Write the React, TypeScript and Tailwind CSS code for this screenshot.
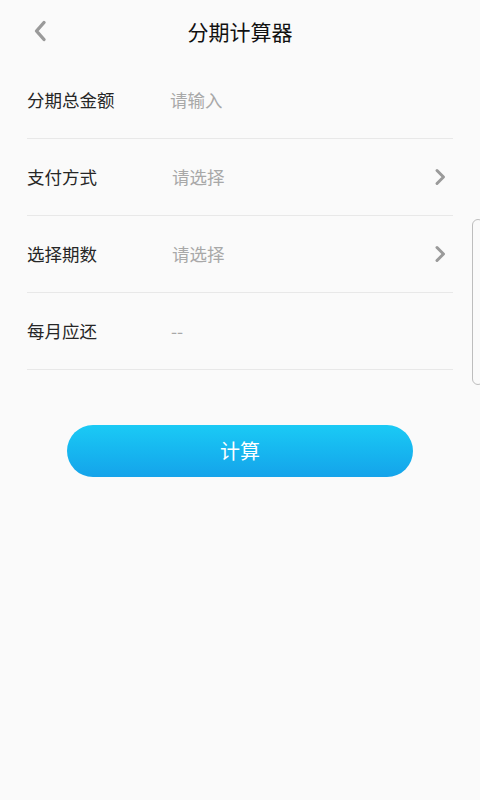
import React from "react";

const rows = [
  { label: "分期总金额", value: "请输入", arrow: false, pad: "pl-0" },
  { label: "支付方式", value: "请选择", arrow: true, pad: "pl-[2px]" },
  { label: "选择期数", value: "请选择", arrow: true, pad: "pl-[2px]" },
  { label: "每月应还", value: "--", arrow: false, pad: "pl-[1px]" },
];

function Chevron({ dir }: { dir: "left" | "right" }) {
  if (dir === "left") {
    return (
      <svg width="14" height="22" viewBox="0 0 14 22" fill="none">
        <path d="M11 2.5L3.5 11l7.5 8.5" stroke="#9a9a9a" strokeWidth="3.4" strokeLinecap="round" strokeLinejoin="round" />
      </svg>
    );
  }
  return (
    <svg width="12" height="18" viewBox="0 0 12 18" fill="none">
      <path d="M3 2.5L9.5 9 3 15.5" stroke="#9a9a9a" strokeWidth="3" strokeLinecap="round" strokeLinejoin="round" />
    </svg>
  );
}

export default function App() {
  return (
    <div
      className="relative w-[480px] h-[800px] bg-[#fafafa] overflow-hidden"
      style={{ fontFamily: '"Noto Sans CJK SC", "Noto Sans", sans-serif' }}
    >
      <header className="relative h-[62px] flex items-center justify-center">
        <button className="absolute left-[33px] top-[20px]">
          <Chevron dir="left" />
        </button>
        <h1 className="text-[21px] text-[#111] font-normal leading-none">分期计算器</h1>
      </header>

      <div className="px-[27px]">
        {rows.map((row) => (
          <div key={row.label} className="h-[77px] flex items-center border-b border-[#e8e8e8]">
            <span className="w-[143px] text-[17.5px] text-[#262626] leading-none">{row.label}</span>
            <span className={`flex-1 text-[17.5px] text-[#a8a8a8] leading-none ${row.pad}`}>{row.value}</span>
            {row.arrow && (
              <span className="mr-[7px] flex items-center">
                <Chevron dir="right" />
              </span>
            )}
          </div>
        ))}
      </div>

      <div className="flex justify-center mt-[55px]">
        <button className="w-[346px] h-[52px] rounded-full bg-gradient-to-b from-[#1bcaf5] to-[#15a3ea] text-white text-[20px] leading-none">
          计算
        </button>
      </div>

      <div className="absolute right-[-4px] top-[219px] w-[12px] h-[166px] rounded-[6px] border border-[#bdbdbd] bg-[#fafafa]" />
    </div>
  );
}
